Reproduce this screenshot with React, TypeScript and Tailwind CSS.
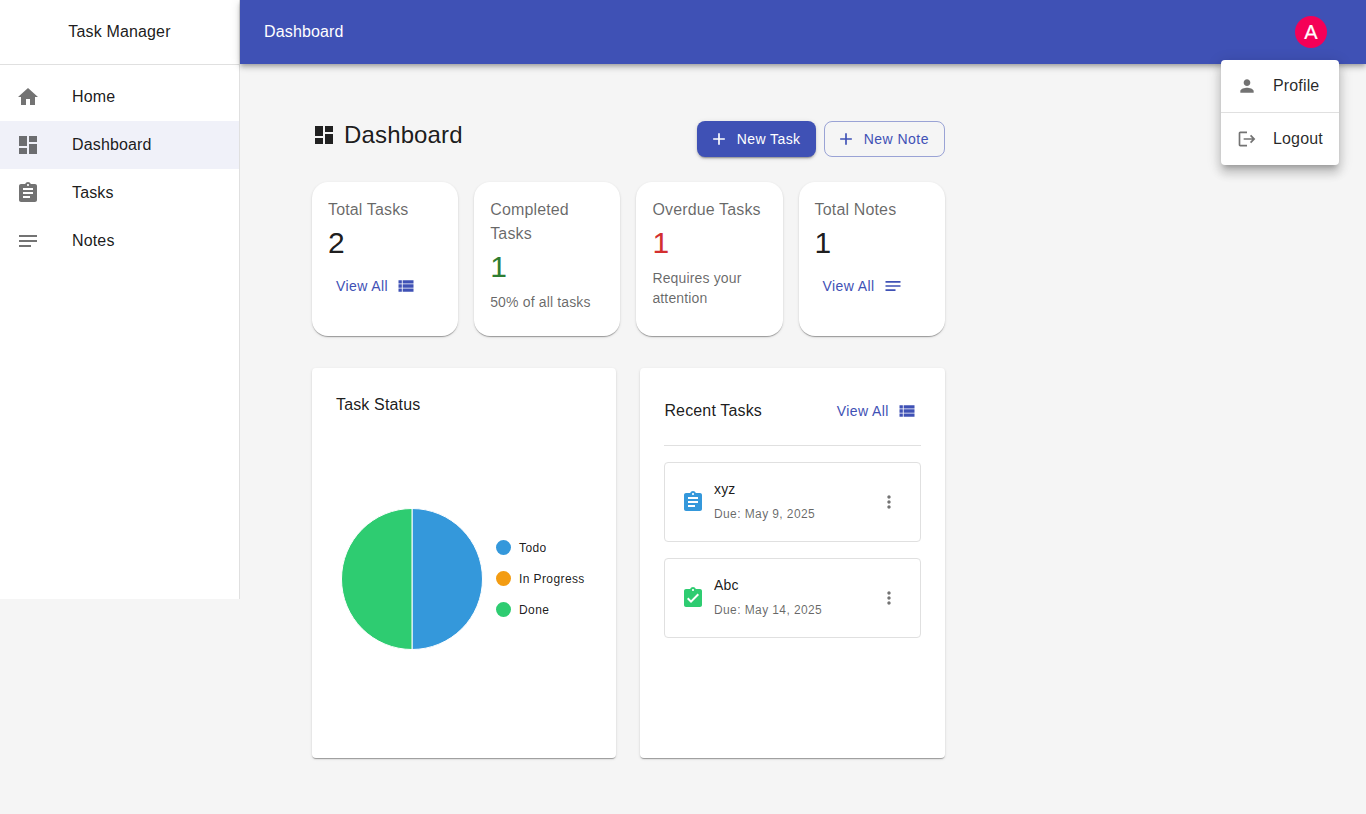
import React from "react";

const P = {
  home: "M10 20v-6h4v6h5v-8h3L12 3 2 12h3v8z",
  dash: "M3 13h8V3H3v10zm0 8h8v-6H3v6zm10 0h8V11h-8v10zm0-18v6h8V3h-8z",
  task: "M19 3h-4.18C14.4 1.84 13.3 1 12 1c-1.3 0-2.4.84-2.82 2H5c-1.1 0-2 .9-2 2v14c0 1.1.9 2 2 2h14c1.1 0 2-.9 2-2V5c0-1.1-.9-2-2-2zm-7 0c.55 0 1 .45 1 1s-.45 1-1 1-1-.45-1-1 .45-1 1-1zm2 14H7v-2h7v2zm3-4H7v-2h10v2zm0-4H7V7h10v2z",
  done: "M19 3h-4.18C14.4 1.84 13.3 1 12 1c-1.3 0-2.4.84-2.82 2H5c-1.1 0-2 .9-2 2v14c0 1.1.9 2 2 2h14c1.1 0 2-.9 2-2V5c0-1.1-.9-2-2-2zm-7 0c.55 0 1 .45 1 1s-.45 1-1 1-1-.45-1-1 .45-1 1-1zm-2 14l-4-4 1.41-1.41L10 14.17l6.59-6.59L18 9l-8 8z",
  notes: "M21 11.01 3 11v2h18zM3 16h12v2H3zM21 6H3v2.01L21 8z",
  list: "M3 14h4v-4H3v4zm0 5h4v-4H3v4zM3 9h4V5H3v4zm5 5h13v-4H8v4zm0 5h13v-4H8v4zM8 5v4h13V5H8z",
  person: "M12 12c2.21 0 4-1.79 4-4s-1.79-4-4-4-4 1.79-4 4 1.79 4 4 4zm0 2c-2.67 0-8 1.34-8 4v2h16v-2c0-2.66-5.33-4-8-4z",
  add: "M19 13h-6v6h-2v-6H5v-2h6V5h2v6h6v2z",
  more: "M12 8c1.1 0 2-.9 2-2s-.9-2-2-2-2 .9-2 2 .9 2 2 2zm0 2c-1.1 0-2 .9-2 2s.9 2 2 2 2-.9 2-2-.9-2-2-2zm0 6c-1.1 0-2 .9-2 2s.9 2 2 2 2-.9 2-2-.9-2-2-2z",
  logout: "M17 7l-1.41 1.41L18.17 11H8v2h10.17l-2.58 2.58L17 17l5-5zM4 5h8V3H4c-1.1 0-2 .9-2 2v14c0 1.1.9 2 2 2h8v-2H4V5z",
};

function Icon({ d, className }: { d: string; className: string }) {
  return (
    <svg viewBox="0 0 24 24" fill="currentColor" className={`shrink-0 ${className}`}>
      <path d={d} />
    </svg>
  );
}

const shadow1 = "shadow-[0_2px_1px_-1px_rgba(0,0,0,0.2),0_1px_1px_0_rgba(0,0,0,0.14),0_1px_3px_0_rgba(0,0,0,0.12)]";

function NavItem({ d, label, active }: { d: string; label: string; active?: boolean }) {
  return (
    <div className={`flex items-center h-12 pl-4 ${active ? "bg-[#f0f1f9]" : ""}`}>
      <Icon d={d} className="w-6 h-6 text-black/55" />
      <span className="ml-8 text-base tracking-[0.15px] text-black/90">{label}</span>
    </div>
  );
}

function ViewAll({ d, className }: { d: string; className?: string }) {
  return (
    <div className={`flex items-center text-[14px] leading-6 tracking-[0.4px] text-[#3f51b5] ${className ?? ""}`}>
      <span>View All</span>
      <Icon d={d} className="w-5 h-5 ml-2" />
    </div>
  );
}

function Stat({
  title,
  value,
  valueColor,
  children,
}: {
  title: string;
  value: string;
  valueColor: string;
  children: React.ReactNode;
}) {
  return (
    <div className={`bg-white rounded-2xl p-4 h-[154px] ${shadow1}`}>
      <div className="text-base leading-6 tracking-[0.15px] text-black/60">{title}</div>
      <div className={`-mt-px text-[30px] leading-[44px] ${valueColor}`}>{value}</div>
      {children}
    </div>
  );
}

function Legend({ color, label }: { color: string; label: string }) {
  return (
    <div className="flex items-center h-[31px]">
      <span className={`w-[15px] h-[15px] rounded-full ${color}`} />
      <span className="ml-2 pt-[2px] text-[12px] tracking-[0.4px] text-black/90">{label}</span>
    </div>
  );
}

function TaskRow({ d, color, title, due }: { d: string; color: string; title: string; due: string }) {
  return (
    <div className="flex items-center h-20 border border-[#e0e0e0] rounded pl-[15.6px] pr-[21px]">
      <Icon d={d} className={`w-6 h-6 ${color}`} />
      <div className="ml-[9px] flex-1 mb-[2px]">
        <div className="text-[14px] leading-5 tracking-[0.15px] text-black/90">{title}</div>
        <div className="mt-[5px] text-[12px] leading-5 tracking-[0.4px] text-black/60">{due}</div>
      </div>
      <Icon d={P.more} className="w-5 h-5 text-black/55" />
    </div>
  );
}

export default function App() {
  return (
    <div className="relative flex min-h-[814px] items-start bg-[#f5f5f5] font-['Liberation_Sans',Arial,sans-serif]">
      <aside className="w-60 h-[599px] shrink-0 bg-white border-r border-[#e0e0e0]">
        <div className="h-[65px] border-b border-[#e0e0e0] flex items-center justify-center text-base tracking-[0.15px] text-black/90">
          Task Manager
        </div>
        <nav className="py-2">
          <NavItem d={P.home} label="Home" />
          <NavItem d={P.dash} label="Dashboard" active />
          <NavItem d={P.task} label="Tasks" />
          <NavItem d={P.notes} label="Notes" />
        </nav>
      </aside>

      <div className="flex-1 min-w-0">
        <header className="h-16 bg-[#3f51b5] flex items-center justify-between pl-6 pr-[39px] text-white shadow-[0_2px_4px_-1px_rgba(0,0,0,0.2),0_4px_5px_0_rgba(0,0,0,0.14),0_1px_10px_0_rgba(0,0,0,0.12)]">
          <span className="text-base tracking-[0.15px]">Dashboard</span>
          <div className="w-8 h-8 rounded-full bg-[#f50057] flex items-center justify-center text-[20px] [-webkit-text-stroke:0.2px_white]">A</div>
        </header>

        <main className="w-[632.8px] ml-[72px] pt-[57px]">
          <div className="flex items-start justify-between h-[61px]">
            <div className="flex items-center h-7">
              <Icon d={P.dash} className="w-6 h-6 text-[#212121]" />
              <h1 className="ml-2 text-2xl tracking-[0.15px] text-black/90">Dashboard</h1>
            </div>
            <div className="flex gap-2">
              <button className="flex items-center h-9 w-[119px] pl-3 rounded-lg bg-[#3f51b5] text-white text-[14px] tracking-[0.4px] shadow-[0_3px_1px_-2px_rgba(0,0,0,0.2),0_2px_2px_0_rgba(0,0,0,0.14),0_1px_5px_0_rgba(0,0,0,0.12)]">
                <Icon d={P.add} className="w-5 h-5" />
                <span className="ml-2">New Task</span>
              </button>
              <button className="flex items-center h-9 w-[121px] pl-[11px] rounded-lg border border-[#3f51b5]/50 text-[#3f51b5] text-[14px] tracking-[0.45px]">
                <Icon d={P.add} className="w-5 h-5" />
                <span className="ml-2">New Note</span>
              </button>
            </div>
          </div>

          <div className="grid grid-cols-4 gap-4">
            <Stat title="Total Tasks" value="2" valueColor="text-black/90">
              <ViewAll d={P.list} className="mt-[9px] ml-2" />
            </Stat>
            <Stat title="Completed Tasks" value="1" valueColor="text-[#2e7d32]">
              <div className="mt-[3px] text-[14px] leading-5 tracking-[0.15px] text-black/60">50% of all tasks</div>
            </Stat>
            <Stat title="Overdue Tasks" value="1" valueColor="text-[#d32f2f]">
              <div className="mt-[3px] text-[14px] leading-5 tracking-[0.15px] text-black/60">
                Requires your
                <br />
                attention
              </div>
            </Stat>
            <Stat title="Total Notes" value="1" valueColor="text-black/90">
              <ViewAll d={P.notes} className="mt-[9px] ml-2" />
            </Stat>
          </div>

          <div className="grid grid-cols-2 gap-6 mt-8">
            <section className={`bg-white rounded h-[390px] px-6 pt-[25px] ${shadow1}`}>
              <div className="text-base leading-6 tracking-[0.15px] text-black/90">Task Status</div>
              <div className="flex items-center mt-[91px] ml-[5px]">
                <svg viewBox="0 0 142 142" className="w-[142px] h-[142px] shrink-0">
                  <path d="M71 .5a70.5 70.5 0 0 1 0 141z" fill="#3498db" stroke="#fff" />
                  <path d="M71 141.5a70.5 70.5 0 0 1 0-141z" fill="#2ecc71" stroke="#fff" />
                </svg>
                <div className="ml-[13px] mb-[2px]">
                  <Legend color="bg-[#3498db]" label="Todo" />
                  <Legend color="bg-[#f39c12]" label="In Progress" />
                  <Legend color="bg-[#2ecc71]" label="Done" />
                </div>
              </div>
            </section>

            <section className={`bg-white rounded h-[390px] px-6 pt-[31px] ${shadow1}`}>
              <div className="flex items-center justify-between h-6">
                <span className="text-base tracking-[0.15px] text-black/90">Recent Tasks</span>
                <ViewAll d={P.list} className="mr-[4px]" />
              </div>
              <div className="mt-[22px] border-t border-[#e0e0e0]" />
              <div className="mt-4 flex flex-col gap-4">
                <TaskRow d={P.task} color="text-[#3498db]" title="xyz" due="Due: May 9, 2025" />
                <TaskRow d={P.done} color="text-[#2ecc71]" title="Abc" due="Due: May 14, 2025" />
              </div>
            </section>
          </div>
        </main>
      </div>

      <div className="absolute left-[1221px] top-[60px] w-[118px] bg-white rounded text-base tracking-[0.15px] text-black/85 shadow-[0_5px_5px_-3px_rgba(0,0,0,0.2),0_8px_10px_1px_rgba(0,0,0,0.14),0_3px_14px_2px_rgba(0,0,0,0.12)]">
        <div className="flex items-center h-[53px] pl-4 pb-px border-b border-[#e0e0e0]">
          <Icon d={P.person} className="w-5 h-5 text-black/55" />
          <span className="ml-4">Profile</span>
        </div>
        <div className="flex items-center h-[52px] pl-4">
          <Icon d={P.logout} className="w-5 h-5 text-black/55" />
          <span className="ml-4">Logout</span>
        </div>
      </div>
    </div>
  );
}
